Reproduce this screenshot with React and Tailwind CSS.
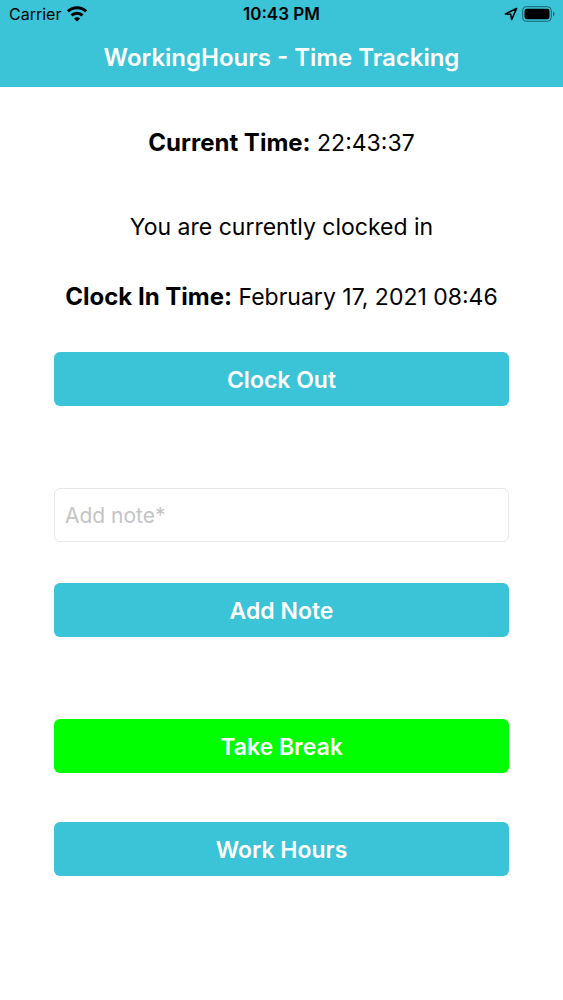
import React, { useState } from 'react'

const BUTTON = 'block h-[54px] w-full rounded-md pt-px text-[23px] leading-7 font-semibold text-white'

function WifiIcon() {
  return (
    <svg className="h-4 w-5" viewBox="0 0 20 16" fill="none" stroke="black" strokeWidth="3" aria-hidden="true">
      <path d="M0.9 5.4a13 13 0 0 1 18.2 0" />
      <path d="M4.5 9.4a8 8 0 0 1 11 0" />
      <path d="M10 15.6L6.9 12.5a4.4 4.4 0 0 1 6.2 0z" fill="black" stroke="none" />
    </svg>
  )
}

function LocationIcon() {
  return (
    <svg className="h-[14px] w-[14px]" viewBox="0 0 14 14" fill="none" stroke="black" strokeWidth="1.5" strokeLinejoin="round" aria-hidden="true">
      <path d="M12.6 1.5L1.4 6.9l5.4 0.4 0.8 5.3z" />
    </svg>
  )
}

function BatteryIcon() {
  return (
    <svg className="h-4 w-[33px]" viewBox="0 0 33 16" aria-hidden="true">
      <rect x="0.7" y="0.7" width="28.6" height="14.6" rx="4" fill="none" stroke="#17636e" strokeWidth="1" />
      <rect x="2.5" y="2.8" width="25" height="10.4" rx="2.2" fill="black" />
      <path d="M31 5.5q1.6 0.8 1.6 2.5t-1.6 2.5z" fill="#17636e" />
    </svg>
  )
}

function Header() {
  return (
    <header className="h-[87px] bg-[#3bc3d7]">
      <div className="grid h-7 grid-cols-3 items-center px-2 text-[17px] leading-7 text-black">
        <div className="flex items-center gap-1.5 pl-px">
          <span className="text-base leading-7">Carrier</span>
          <WifiIcon />
        </div>
        <div className="text-center font-semibold">10:43 PM</div>
        <div className="flex items-center justify-end gap-1">
          <LocationIcon />
          <BatteryIcon />
        </div>
      </div>
      <h1 className="pt-4 text-center text-2xl leading-7 font-semibold text-white">WorkingHours - Time Tracking</h1>
    </header>
  )
}

export default function App() {
  const [note, setNote] = useState('')

  return (
    <div className="min-h-screen bg-white font-['Inter',sans-serif] text-black">
      <Header />

      <main className="px-[54px] pt-[42px] pb-10">
        <div className="-mx-6 text-center text-[23px] leading-7">
          <p><strong className="text-2xl leading-7 font-bold">Current Time:</strong> 22:43:37</p>
          <p className="mt-14">You are currently clocked in</p>
          <p className="mt-[42px]"><strong className="text-2xl leading-7 font-bold">Clock In Time:</strong> February 17, 2021 08:46</p>
        </div>

        <button type="button" className={`${BUTTON} mt-[41px] bg-[#3bc3d7]`}>Clock Out</button>

        <input
          type="text"
          aria-label="Add note"
          placeholder="Add note*"
          value={note}
          onChange={e => setNote(e.target.value)}
          className="mt-[82px] block h-[54px] w-full rounded-md border border-[#e8e8e8] px-2.5 text-[21px] leading-7 outline-none placeholder:text-[#c4c4c6]"
        />

        <button type="button" className={`${BUTTON} mt-[41px] bg-[#3bc3d7]`}>Add Note</button>
        <button type="button" className={`${BUTTON} mt-[82px] bg-[#00ff00]`}>Take Break</button>
        <button type="button" className={`${BUTTON} mt-[49px] bg-[#3bc3d7]`}>Work Hours</button>
      </main>
    </div>
  )
}
